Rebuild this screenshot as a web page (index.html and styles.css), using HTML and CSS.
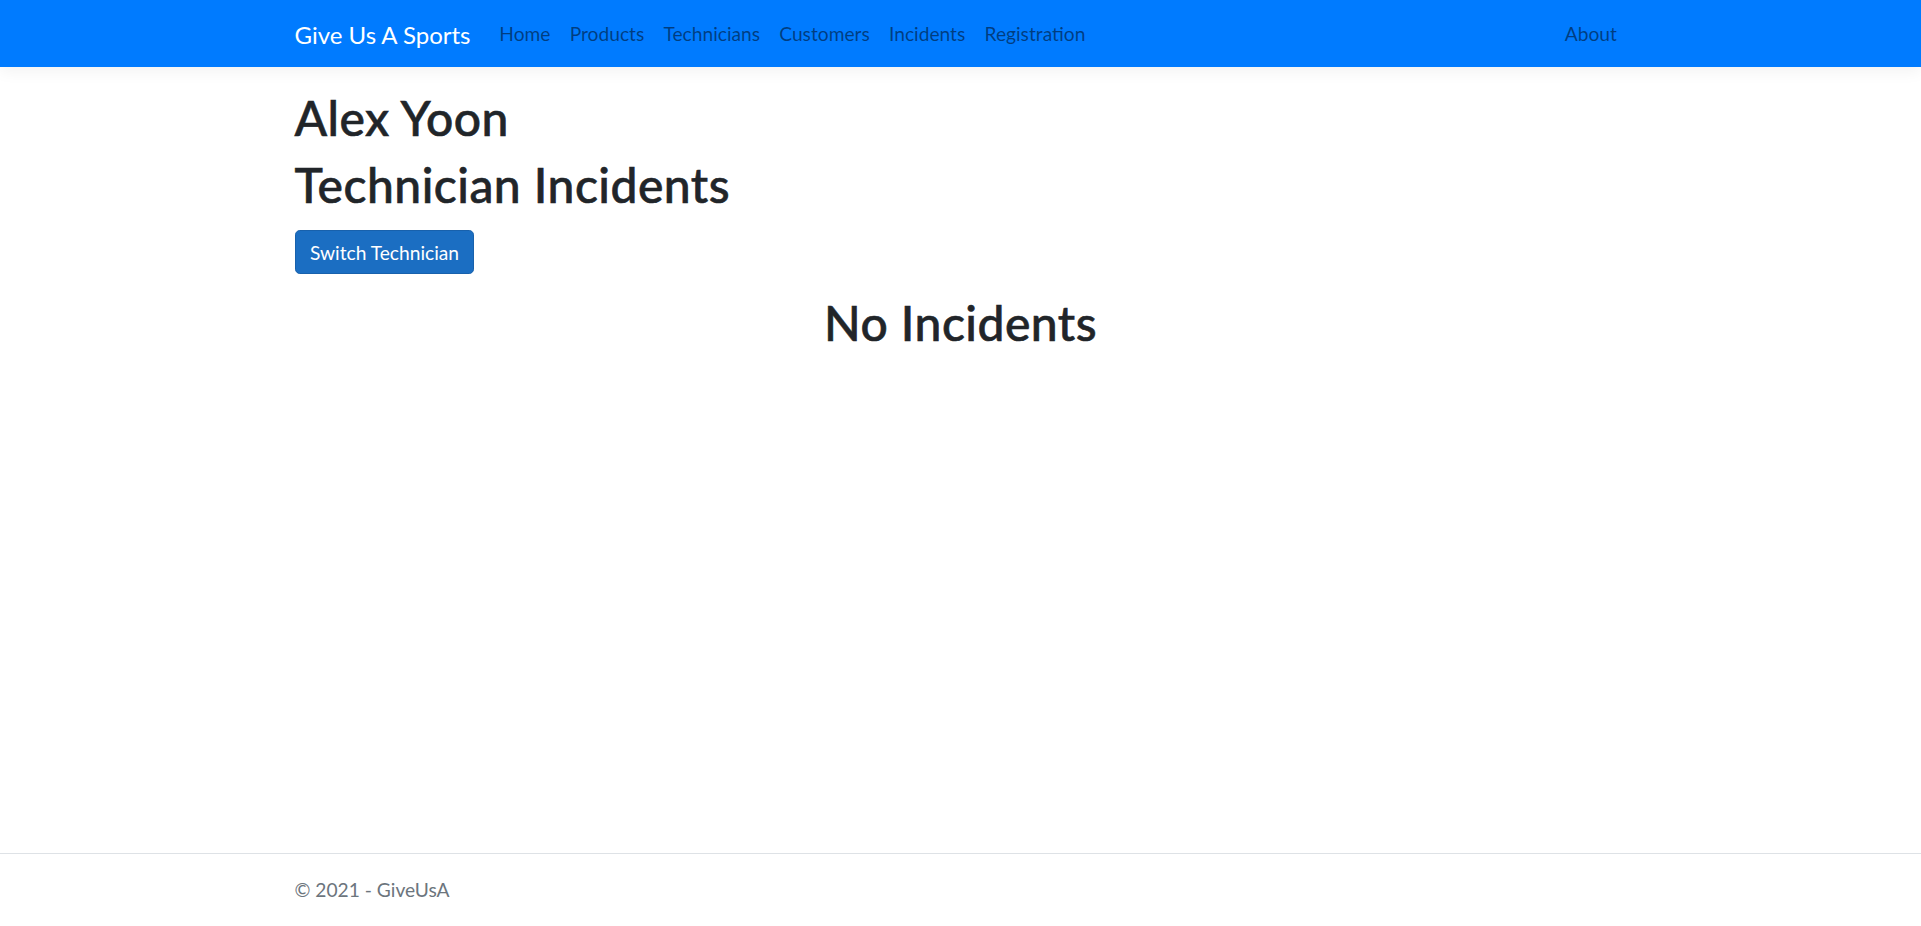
FILE: index.html
```html
<!DOCTYPE html>
<html lang="en">
<head>
<meta charset="utf-8">
<title>Technician Incidents - GiveUsA</title>
<link rel="stylesheet" href="styles.css">
</head>
<body>
<header>
  <nav class="navbar">
    <div class="container navbar-inner">
      <a class="navbar-brand" href="#">Give Us A Sports</a>
      <ul class="nav-list">
        <li><a class="nav-link" href="#">Home</a></li>
        <li><a class="nav-link" href="#">Products</a></li>
        <li><a class="nav-link" href="#">Technicians</a></li>
        <li><a class="nav-link" href="#">Customers</a></li>
        <li><a class="nav-link" href="#">Incidents</a></li>
        <li><a class="nav-link" href="#">Registration</a></li>
      </ul>
      <ul class="nav-list nav-right">
        <li><a class="nav-link" href="#">About</a></li>
      </ul>
    </div>
  </nav>
</header>
<main class="container main">
  <h1 class="title">Alex Yoon</h1>
  <h1 class="title">Technician Incidents</h1>
  <div class="actions">
    <a class="btn btn-primary" href="#">Switch Technician</a>
  </div>
  <h1 class="title center">No Incidents</h1>
</main>
<footer class="footer">
  <div class="container">&copy; 2021 - GiveUsA</div>
</footer>
</body>
</html>
```
FILE: styles.css
```css
* { box-sizing: border-box; }
html { font-size: 19.2px; }
body {
  margin: 0;
  min-height: 100vh;
  display: flex;
  flex-direction: column;
  font-family: Lato, "Open Sans", sans-serif;
  font-size: 19.2px;
  line-height: 1.5;
  color: #212529;
  background: #fff;
}
a { text-decoration: none; }
.container {
  width: 1368px;
  max-width: 100%;
  margin: 0 auto;
  padding: 0 18px;
}
.navbar {
  background: #007bff;
  padding: 9.6px 0;
  box-shadow: 0 4.8px 14.4px rgba(0, 0, 0, 0.05);
  margin-bottom: 19.2px;
}
.navbar-inner {
  display: flex;
  align-items: center;
}
.navbar-brand {
  color: #fff;
  font-size: 24px;
  line-height: 36px;
  padding: 7px 0 5px;
  margin-right: 19.2px;
  white-space: nowrap;
}
.nav-list {
  list-style: none;
  margin: 0;
  padding: 0;
  display: flex;
}
.nav-right { margin-left: auto; }
.nav-link {
  display: block;
  padding: 10.6px 9.6px 8.6px;
  line-height: 28.8px;
  color: rgba(0, 0, 0, 0.5);
}
.main { padding-bottom: 19.2px; flex: 1; }
.title {
  margin: 0 0 7.2px;
  padding-top: 2.4px;
  font-size: 48px;
  font-weight: 500;
  letter-spacing: 0.01em;
  line-height: 1.2;
  -webkit-text-stroke: 0.6px currentColor;
}
.center { text-align: center; }
.actions { margin: 16.8px 0 17.5px; }
.btn {
  display: inline-block;
  font-size: 19.2px;
  line-height: 28.8px;
  padding: 7.2px 14.4px 6px;
  border: 1px solid transparent;
  border-radius: 4.8px;
}
.btn-primary {
  color: #fff;
  background: #1b6ec2;
  border-color: #1861ac;
}
.footer {
  border-top: 1px solid #dee2e6;
  color: #6c757d;
  line-height: 72px;
  white-space: nowrap;
}
```
